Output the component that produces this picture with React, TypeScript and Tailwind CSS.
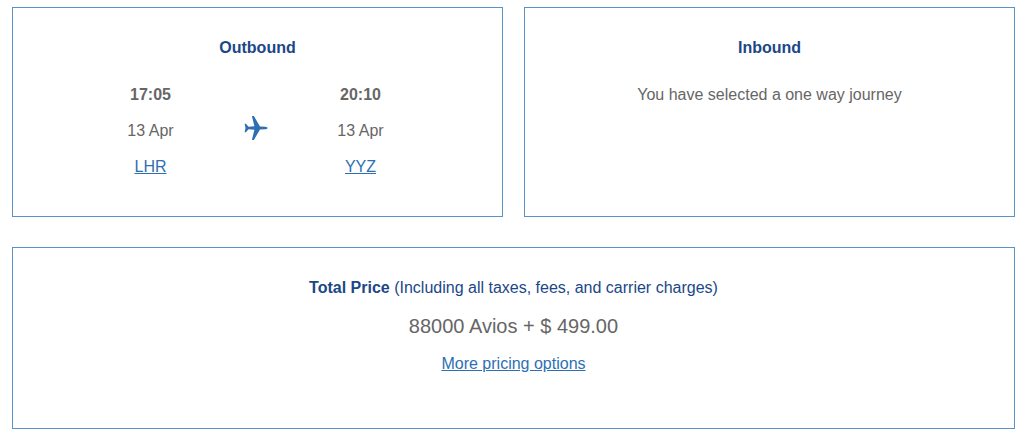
type Stop = {
  time: string;
  date: string;
  code: string;
};

const departure: Stop = { time: '17:05', date: '13 Apr', code: 'LHR' };
const arrival: Stop = { time: '20:10', date: '13 Apr', code: 'YYZ' };

const PlaneIcon = () => (
  <svg viewBox="0 0 24 26" className="w-6 h-[26px]" fill="#2e6fb3" aria-hidden="true">
    <path d="M0.6 8.8h1.3l2.6 2.9 5.9-0.4L7.9 1h2l6.1 10.4 5 0.3c1.6 0.1 2.6 0.7 2.6 1.3s-1 1.2-2.6 1.3l-5 0.3L9.9 25h-2l2.5-10.3-5.9-0.4-2.6 2.9H0.6l0.9-4.2z" />
  </svg>
);

const StopDetails = ({ stop }: { stop: Stop }) => (
  <div className="flex flex-col items-center gap-3">
    <strong className="font-bold">{stop.time}</strong>
    <span>{stop.date}</span>
    <a href="#" className="text-[#2e6fb3] underline">
      {stop.code}
    </a>
  </div>
);

const App = () => {
  return (
    <main className="bg-white pl-3 pr-[9px] pt-[7px] pb-1 font-['Liberation_Sans',Arial,sans-serif] text-[16px] leading-6 text-[#666666] text-center">
      {/* Journeys */}
      <div className="grid grid-cols-2 gap-[21px]">
        <section className="border border-[#5a92c8] px-4 pt-7 pb-[37px]">
          <h2 className="font-bold text-[#1b4787]">Outbound</h2>
          <div className="mt-[23px] mx-auto w-full max-w-[319px] pr-1 grid grid-cols-3">
            <StopDetails stop={departure} />
            <div className="flex justify-center pt-8">
              <PlaneIcon />
            </div>
            <StopDetails stop={arrival} />
          </div>
        </section>

        <section className="border border-[#5a92c8] px-4 pt-7 pb-[37px]">
          <h2 className="font-bold text-[#1b4787]">Inbound</h2>
          <p className="mt-[23px]">You have selected a one way journey</p>
        </section>
      </div>

      {/* Price */}
      <section className="mt-[30px] border border-[#5a92c8] px-4 pt-7 pb-[52px]">
        <h2 className="text-[#1b4787]">
          <strong className="font-bold">Total Price</strong> (Including all taxes, fees, and carrier charges)
        </h2>
        <p className="mt-3 text-[20px] leading-7">88000 Avios + $ 499.00</p>
        <a href="#" className="mt-3 inline-block text-[#2e6fb3] underline">
          More pricing options
        </a>
      </section>
    </main>
  );
};

export default App;
